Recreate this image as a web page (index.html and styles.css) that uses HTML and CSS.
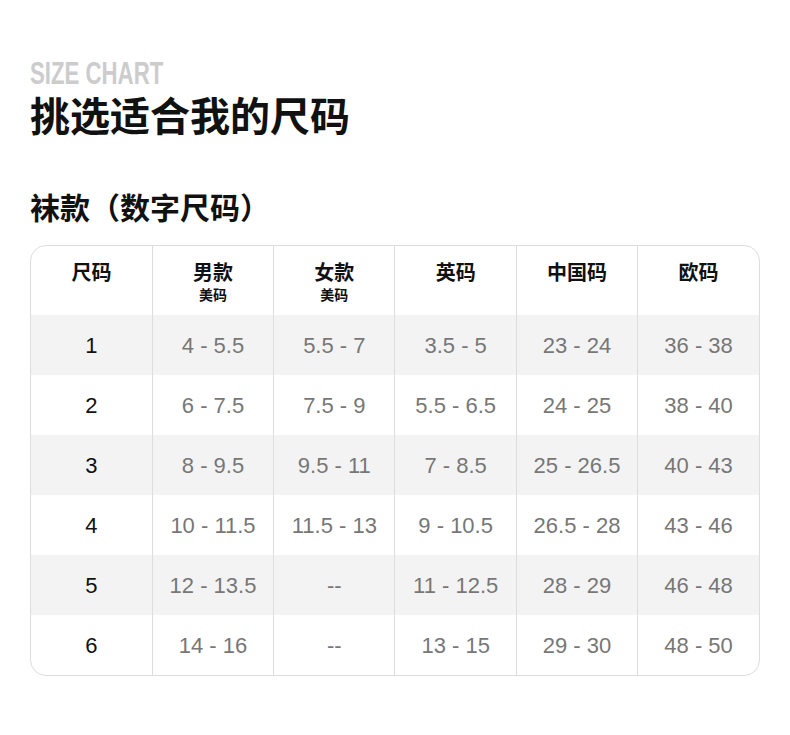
FILE: index.html
```html
<!DOCTYPE html>
<html lang="zh">
<head>
<meta charset="utf-8">
<link rel="stylesheet" href="styles.css">
</head>
<body>
<div class="page">
  <div class="eyebrow"><span class="eyebrow-text">SIZE CHART</span></div>
  <h1 class="title">挑选适合我的尺码</h1>
  <h2 class="subtitle">袜款（数字尺码）</h2>
  <div class="chart">
    <table>
      <thead>
        <tr>
          <th>尺码</th>
          <th>男款<span class="sub">美码</span></th>
          <th>女款<span class="sub">美码</span></th>
          <th>英码</th>
          <th>中国码</th>
          <th>欧码</th>
        </tr>
      </thead>
      <tbody>
        <tr><td class="size">1</td><td>4 - 5.5</td><td>5.5 - 7</td><td>3.5 - 5</td><td>23 - 24</td><td>36 - 38</td></tr>
        <tr><td class="size">2</td><td>6 - 7.5</td><td>7.5 - 9</td><td>5.5 - 6.5</td><td>24 - 25</td><td>38 - 40</td></tr>
        <tr><td class="size">3</td><td>8 - 9.5</td><td>9.5 - 11</td><td>7 - 8.5</td><td>25 - 26.5</td><td>40 - 43</td></tr>
        <tr><td class="size">4</td><td>10 - 11.5</td><td>11.5 - 13</td><td>9 - 10.5</td><td>26.5 - 28</td><td>43 - 46</td></tr>
        <tr><td class="size">5</td><td>12 - 13.5</td><td>--</td><td>11 - 12.5</td><td>28 - 29</td><td>46 - 48</td></tr>
        <tr><td class="size">6</td><td>14 - 16</td><td>--</td><td>13 - 15</td><td>29 - 30</td><td>48 - 50</td></tr>
      </tbody>
    </table>
  </div>
</div>
</body>
</html>
```
FILE: styles.css
```css
* { box-sizing: border-box; }
html, body { margin: 0; padding: 0; background: #fff; }
body { font-family: "Liberation Sans", "Noto Sans CJK SC", sans-serif; }
.page { padding: 58px 30px 0 30px; }
.eyebrow {
  height: 30px;
  line-height: 30px;
}
.eyebrow-text {
  display: inline-block;
  font-family: "Liberation Sans Narrow", "Liberation Sans", sans-serif;
  font-weight: bold;
  font-size: 32px;
  line-height: 30px;
  color: #cccccc;
  transform: scaleX(0.694);
  transform-origin: 0 50%;
}
.title {
  margin: 2px 0 0 0;
  font-family: "Noto Sans CJK SC", sans-serif;
  font-weight: 700;
  font-size: 40px;
  line-height: 48px;
  color: #111;
}
.subtitle {
  margin: 50px 0 0 0;
  font-family: "Noto Sans CJK SC", sans-serif;
  font-weight: 700;
  font-size: 30px;
  line-height: 36px;
  color: #111;
}
.chart {
  margin-top: 21px;
  border: 1px solid #dddddd;
  border-radius: 16px;
  overflow: hidden;
}
table {
  width: 100%;
  border-collapse: collapse;
  table-layout: fixed;
}
th, td {
  text-align: center;
  border-left: 1px solid #dddddd;
  padding: 0;
}
th:first-child, td:first-child { border-left: none; }
th {
  height: 69px;
  vertical-align: top;
  padding-top: 13px;
  font-family: "Noto Sans CJK SC", sans-serif;
  font-weight: 700;
  font-size: 20px;
  line-height: 26px;
  color: #111;
}
th .sub {
  display: block;
  font-size: 14px;
  line-height: 18px;
}
td {
  height: 60px;
  padding-top: 1px;
  font-family: "Liberation Sans", sans-serif;
  font-size: 22px;
  color: #777777;
}
td.size { color: #111; }
tbody tr:nth-child(odd) td { background: #f3f3f3; }
```
